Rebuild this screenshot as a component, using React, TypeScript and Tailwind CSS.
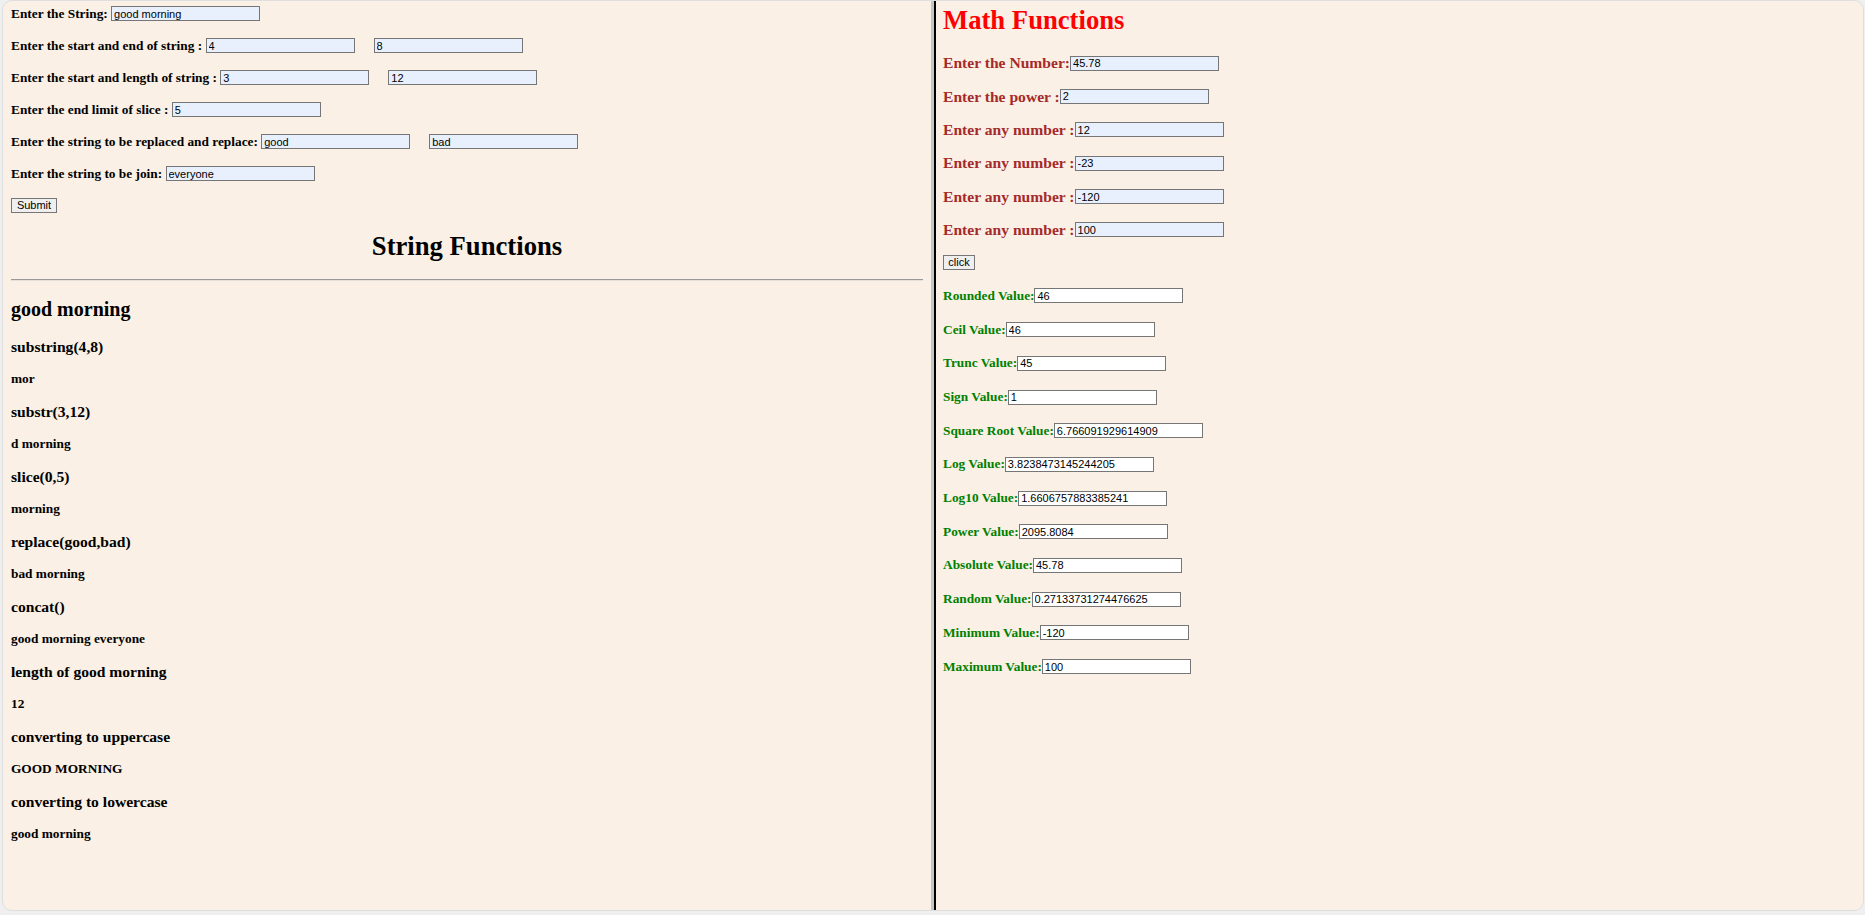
import React from "react";

const serif = "font-['Liberation_Serif','Times_New_Roman',serif]";
const sans = "font-['Liberation_Sans',Arial,sans-serif]";

const inputBase = `h-[15px] w-[149px] border border-[#767676] px-[2px] text-[11px] leading-none text-black outline-none ${sans}`;

function Field({ label, values }: { label: string; values: string[] }) {
  return (
    <div className="flex h-[19px] items-center">
      <span className="whitespace-pre text-[13.33px] font-bold">{label}</span>
      <input readOnly value={values[0]} className={`${inputBase} bg-[#e8f0fe]`} />
      {values[1] !== undefined && (
        <input readOnly value={values[1]} className={`${inputBase} ml-[19px] bg-[#e8f0fe]`} />
      )}
    </div>
  );
}

const results = [
  ["substring(4,8)", "mor"],
  ["substr(3,12)", "d morning"],
  ["slice(0,5)", "morning"],
  ["replace(good,bad)", "bad morning"],
  ["concat()", "good morning everyone"],
  ["length of good morning", "12"],
  ["converting to uppercase", "GOOD MORNING"],
  ["converting to lowercase", "good morning"],
];

const mathInputs = [
  ["Enter the Number:", "45.78"],
  ["Enter the power :", "2"],
  ["Enter any number :", "12"],
  ["Enter any number :", "-23"],
  ["Enter any number :", "-120"],
  ["Enter any number :", "100"],
];

const mathOutputs = [
  ["Rounded Value:", "46"],
  ["Ceil Value:", "46"],
  ["Trunc Value:", "45"],
  ["Sign Value:", "1"],
  ["Square Root Value:", "6.766091929614909"],
  ["Log Value:", "3.8238473145244205"],
  ["Log10 Value:", "1.6606757883385241"],
  ["Power Value:", "2095.8084"],
  ["Absolute Value:", "45.78"],
  ["Random Value:", "0.27133731274476625"],
  ["Minimum Value:", "-120"],
  ["Maximum Value:", "100"],
];

export default function App() {
  return (
    <div className={`h-[915px] w-[1865px] overflow-hidden bg-[#efefef] ${serif} text-black`}>
      <div className="ml-[2px] flex h-[911px] w-[1862px] overflow-hidden rounded-[10px] border border-[#dedede] bg-[#faf0e6]">
        {/* left frame: string functions */}
        <div className="w-[928px] shrink-0 px-[8px] pt-[3px]">
          <div className="flex flex-col gap-[13px]">
            <Field label="Enter the String: " values={["good morning"]} />
            <Field label="Enter the start and end of string : " values={["4", "8"]} />
            <Field label="Enter the start and length of string : " values={["3", "12"]} />
            <Field label="Enter the end limit of slice : " values={["5"]} />
            <Field label="Enter the string to be replaced and replace: " values={["good", "bad"]} />
            <Field label="Enter the string to be join: " values={["everyone"]} />
          </div>
          <button className={`mt-[15px] flex h-[15px] w-[46px] items-center justify-center border border-[#767676] bg-[#efefef] text-[11px] leading-none ${sans}`}>
            Submit
          </button>
          <h1 className="mt-[18px] h-[31px] text-center text-[26.67px] font-bold leading-[31px]">String Functions</h1>
          <div className="mt-[17px] h-[2px] border-t border-b border-t-[#9a9a9a] border-b-[#e6e0da]" />
          <h2 className="mt-[17px] h-[23px] text-[20px] font-bold leading-[23px]">good morning</h2>
          {results.map(([title, value], i) => (
            <div key={i}>
              <h3 className={`h-[18px] text-[15.6px] font-bold leading-[18px] ${i === 0 ? "mt-[16.5px]" : "mt-[15.5px]"}`}>{title}</h3>
              <h4 className="mt-[15.5px] h-[16px] text-[13.33px] font-bold leading-[16px]">{value}</h4>
            </div>
          ))}
        </div>

        {/* frame divider */}
        <div className="w-[3px] shrink-0 bg-[#c6c6c6]" />
        <div className="w-[2px] shrink-0 bg-black" />

        {/* right frame: math functions */}
        <div className="flex-1 pl-[7px] pt-[4px]">
          <h1 className="h-[31px] text-[26.67px] font-bold leading-[31px] text-[#ff0000]">Math Functions</h1>
          <div className="mt-[18px] flex flex-col gap-[15.4px]">
            {mathInputs.map(([label, value], i) => (
              <div key={i} className="flex h-[18px] items-center">
                <span className="whitespace-pre text-[15.6px] font-bold text-[#a52a2a]">{label}</span>
                <input readOnly value={value} className={`${inputBase} bg-[#e8f0fe]`} />
              </div>
            ))}
          </div>
          <button className={`mt-[16px] flex h-[15px] w-[32px] items-center justify-center border border-[#767676] bg-[#efefef] text-[11px] leading-none ${sans}`}>
            click
          </button>
          <div className="mt-[18px] flex flex-col gap-[17.7px]">
            {mathOutputs.map(([label, value], i) => (
              <div key={i} className="flex h-[16px] items-center">
                <span className="whitespace-pre text-[13.33px] font-bold text-[#008000]">{label}</span>
                <input readOnly value={value} className={`${inputBase} bg-white`} />
              </div>
            ))}
          </div>
        </div>
      </div>
    </div>
  );
}
